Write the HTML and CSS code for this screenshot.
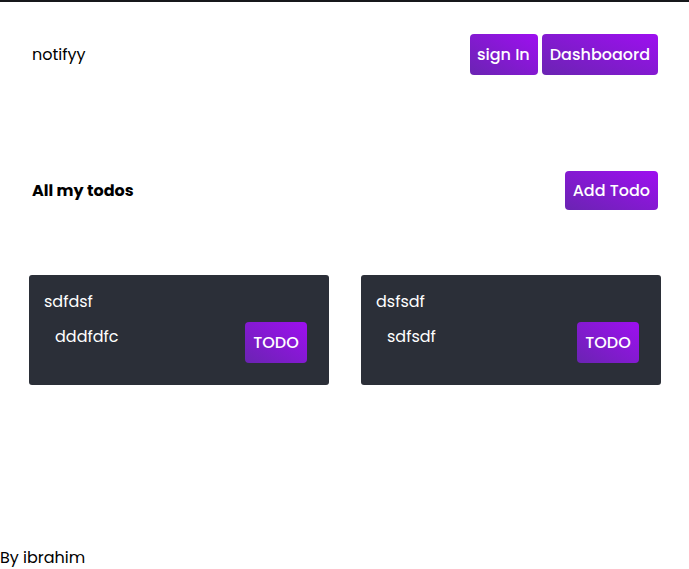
FILE: index.html
```html
<!DOCTYPE html>
<html lang="en">
<head>
<meta charset="utf-8">
<title>notifyy</title>
<link rel="stylesheet" href="styles.css">
</head>
<body>
<div class="page">
  <header class="header">
    <div class="brand">notifyy</div>
    <nav class="nav">
      <button class="btn btn-signin">sign In</button>
      <button class="btn">Dashboaord</button>
    </nav>
  </header>
  <main class="main">
    <div class="title-row">
      <h1 class="title">All my todos</h1>
      <button class="btn btn-add">Add Todo</button>
    </div>
    <div class="cards">
      <div class="card">
        <div class="card-title">sdfdsf</div>
        <div class="card-row">
          <div class="card-desc">dddfdfc</div>
          <button class="btn btn-todo">TODO</button>
        </div>
      </div>
      <div class="card">
        <div class="card-title">dsfsdf</div>
        <div class="card-row">
          <div class="card-desc">sdfsdf</div>
          <button class="btn btn-todo">TODO</button>
        </div>
      </div>
    </div>
  </main>
  <footer class="footer">By ibrahim</footer>
</div>
</body>
</html>
```
FILE: styles.css
```css
* { box-sizing: border-box; }
html, body { margin: 0; padding: 0; background: #fff; }
body {
  font-family: "Poppins", "Open Sans", "DejaVu Sans", sans-serif;
  color: #000;
}
.page {
  min-height: 100vh;
  display: flex;
  flex-direction: column;
  border-top: 2px solid #16181b;
}
.header {
  display: flex;
  justify-content: space-between;
  align-items: center;
  padding: 32px 31px 0 32px;
}
.brand { font-size: 16px; }
.nav { display: flex; gap: 4px; }
.btn {
  font-family: inherit;
  font-size: 16px;
  font-weight: 500;
  color: #fff;
  border: none;
  border-radius: 4px;
  background: linear-gradient(to top right, #6a24b2, #9e0ff0);
  height: 41px;
  padding: 0 8px;
  white-space: nowrap;
  cursor: pointer;
}
.btn-signin { padding: 0 8px 0 7px; }
.main { padding: 96px 28px 0 29px; }
.title-row {
  display: flex;
  justify-content: space-between;
  align-items: center;
  padding: 0 3px 0 3px;
}
.title { margin: 0; font-size: 16px; font-weight: 700; }
.btn-add { height: 39px; }
.cards {
  display: grid;
  grid-template-columns: 300px 300px;
  column-gap: 32px;
  margin-top: 65px;
}
.card {
  background: #2b2f38;
  border-radius: 3px;
  color: #fff;
  padding: 16px 22px 22px 15px;
}
.card-title { font-size: 16px; line-height: 22px; }
.card-row {
  display: flex;
  justify-content: space-between;
  align-items: flex-start;
  margin-top: 9px;
}
.card-desc { font-size: 16px; line-height: 22px; padding-left: 11px; margin-top: 4px; }
.btn-todo { width: 62px; padding: 0; font-size: 16px; }
.footer {
  margin-top: auto;
  font-size: 16px;
  line-height: 22px;
}
```
